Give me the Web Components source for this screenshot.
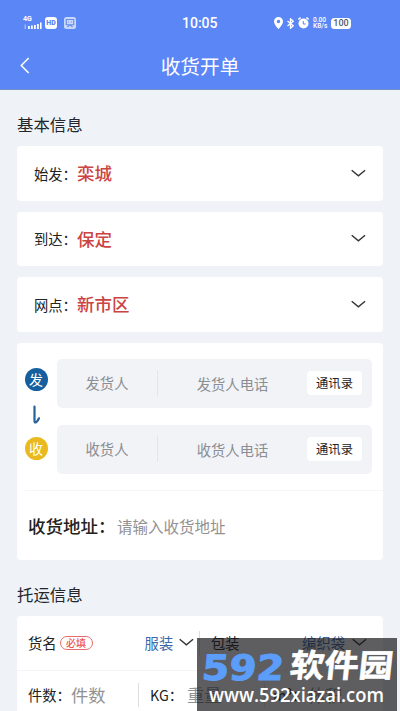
<!DOCTYPE html>
<html lang="zh-CN">
<head>
<meta charset="utf-8">
<title>收货开单</title>
<style>
html,body{margin:0;height:100%}
body{width:400px;height:711px;overflow:hidden;position:relative;background:#eff3f7;color:#222;font-family:"Noto Sans CJK SC",sans-serif}
</style>
</head>
<body>
<order-page></order-page>
<script>
const define = (name, html) => customElements.define(name, class extends HTMLElement {
  constructor() {
    super();
    const t = document.createElement('template');
    t.innerHTML = html.replace(/\{(\w+)\}/g, (_, k) => this.getAttribute(k) || '');
    this.attachShadow({ mode: 'open' }).append(t.content.cloneNode(true));
  }
});

define('chevron-icon', `<style>:host{display:block;width:16px;height:10px;flex:none}svg{display:block}</style>
<svg width="16" height="10" viewBox="0 0 16 10" fill="none" stroke="#333" stroke-width="1.4"><path d="M1.7 2.2 8.4 7.8l6.7-5.6"/></svg>`);

define('status-bar', `<style>
:host{display:flex;height:46px;box-sizing:border-box;padding:15px 49px 15px 22px;align-items:center;color:#fff;font-family:Roboto,sans-serif}
svg{display:block;flex:none}
.time{font:500 14px/16px Roboto,sans-serif;margin-left:106px;width:37px}
.right{display:flex;align-items:center;margin-left:auto}
.speed{font:500 6.6px/7px Roboto,sans-serif;width:15px;margin-left:4px;white-space:nowrap}
.speed div{height:6.5px}
.bat{background:#fff;color:#525a70;border-radius:3.5px;font:500 9px/11px Roboto,sans-serif;width:20px;height:11px;text-align:center;margin-left:3px}
.sig{position:relative;width:20px;height:13px}
.sig b{position:absolute;left:1px;top:-1px;font:700 7px/7px Roboto,sans-serif}
.sig svg{position:absolute;left:0;top:0}
.hd{font:900 7px/12px Roboto,sans-serif;background:#fff;color:#5b84f4;border-radius:3px;width:12px;height:12px;text-align:center;margin-left:3px}
</style>
<div class="sig"><b>4G</b><svg width="20" height="13" fill="#fff"><path d="M6 9h1.8v3H6zM9 8.5h1.8V12H9zM12 8h1.8v4H12zM15 7h1.8v5H15zM18 5.5h1.6V12H18z"/><path opacity=".4" d="M2.5 7.5h1.5V12H2.5z"/></svg></div>
<div class="hd">HD</div>
<svg style="margin-left:7px" width="12" height="12"><rect width="12" height="12" rx="2.5" fill="#c9d8fd"/><path d="M2.3 2.5h7.4v5.2H2.3zM3.5 10l2.5-2.3L8.500 10M4.300 5h.9M6.900 5h.9" fill="none" stroke="#668be9" stroke-width="1.100"/></svg>
<div class="time">10:05</div>
<div class="right">
<svg width="9" height="12" viewBox="0 0 9 12"><path fill="#fff" fill-rule="evenodd" d="M4.500 0A4.400 4.400 0 0 0 0 4.400C0 7.400 4.500 12 4.500 12S9 7.400 9 4.400A4.400 4.400 0 0 0 4.500 0Zm0 2.800a1.700 1.700 0 1 1 0 3.400 1.700 1.700 0 0 1 0-3.400Z"/></svg>
<svg style="margin-left:4px" width="7" height="11" viewBox="0 0 7 11"><path d="M.5 3 6.200 7.800 3.500 10.200V.8l2.700 2.400L.5 8" fill="none" stroke="#fff" stroke-width="1.300"/></svg>
<svg style="margin-left:4px" width="11" height="12" viewBox="0 0 11 12"><circle cx="5.500" cy="6.500" r="5" fill="#fff"/><path d="M.4 2.400 2.600.7M10.600 2.400 8.400.7" stroke="#fff" stroke-width="1.500"/><path d="M5.300 4v3h2.400" fill="none" stroke="#5b84f4"/></svg>
<div class="speed"><div>0.00</div><div>KB/s</div></div><div class="bat">100</div></div>`);

define('nav-bar', `<style>:host{display:grid;grid-template-columns:1fr auto 1fr;height:43px;align-items:center;color:#fff;box-sizing:border-box;padding-bottom:4px}
h1{margin:0;font-size:19.7px;line-height:28px;font-weight:400}
svg{margin-left:20px;display:block}</style>
<svg width="10" height="17" fill="none" stroke="#fff" stroke-width="1.6"><path d="M8.700 1 1.300 8.500 8.700 16"/></svg><h1><slot></slot></h1>`);

define('section-title', `<style>:host{display:block;font-size:16.4px;line-height:24px;color:#23262b;padding:22px 17px 10px}</style><slot></slot>`);

define('select-row', `<style>:host{display:flex;align-items:center;box-sizing:border-box;height:54.500px;margin:0 17px 11px;background:#fff;border-radius:4px;padding:0 17px}
span{font-size:14.3px;width:43px;white-space:nowrap}b{font-weight:500;font-size:17.5px;color:#cc4343;flex:1;line-height:24px}chevron-icon{margin-bottom:1px}</style>
<span>{label}：</span><b><slot></slot></b><chevron-icon></chevron-icon>`);

define('contact-row', `<style>:host{display:flex;align-items:center;height:49px;background:#f1f3f7;border-radius:5px;box-sizing:border-box;padding-right:10px;color:#8b8e92;font-size:14.300px}
.n{width:101px;text-align:center;box-sizing:border-box;border-right:1px solid #e2e5ea;line-height:26px}
.p{flex:1;text-align:center}
button{font:400 12.3px/23px "Noto Sans CJK SC",sans-serif;color:#222;background:#fff;border:0;border-radius:4px;width:55px;height:24px;padding:0}</style>
<div class="n">{who}</div><div class="p">{who}电话</div><button>通讯录</button>`);

define('route-mark', `<style>:host{display:flex;flex-direction:column;align-items:center;width:24px}
i{font-style:normal;width:23px;height:23px;border-radius:50%;color:#fff;font-size:14px;line-height:22px;text-align:center;background:#155f9f}
i.y{background:#e9b91f}svg{margin:14px 0 13px}</style>
<i>发</i><svg width="9" height="19" fill="none" stroke="#26639b" stroke-width="2.2" stroke-linecap="round" stroke-linejoin="round"><path d="M2.500 1.500V16q0 2 1.600 1.300Q5.800 16 7 13.300"/></svg><i class="y">收</i>`);

define('address-card', `<style>:host{display:block;margin:0 17px;background:#fff;border-radius:4px;height:217px;box-sizing:border-box;padding-top:16px}
.top{display:flex;gap:9px;padding:0 11px 0 7px}route-mark{padding-top:9.500px}.rows{flex:1;display:flex;flex-direction:column;gap:17px}
.addr{display:flex;align-items:center;height:68px;margin-top:16px;border-top:1px solid #f6f6f6;margin-left:8px;padding-left:3px;box-sizing:border-box;padding-top:3px}
b{font-weight:500;font-size:17.500px;width:89px;white-space:nowrap;color:#222}span{font-size:15.500px;color:#929292}</style>
<div class="top"><route-mark></route-mark><div class="rows"><contact-row who="发货人"></contact-row><contact-row who="收货人"></contact-row></div></div>
<div class="addr"><b>收货地址：</b><span>请输入收货地址</span></div>`);

define('cargo-card', `<style>:host{display:block;margin:0 17px;background:#fff;border-radius:4px;height:120px;font-size:14.300px}
.r{display:flex;align-items:center;height:55px;padding:0 16px 0 11px;box-sizing:border-box}
.r.a{border-bottom:1px solid #f5f5f5}
em{font-style:normal;color:#ec5555;border:1px solid #e86c6c;border-radius:8px;font-size:10px;font-weight:500;line-height:12px;width:31px;text-align:center;margin-left:3px}
.v{color:#3a69ab;margin-left:auto}.l{width:171px;display:flex;align-items:center}chevron-icon{margin-left:6px;margin-bottom:2px}.l chevron-icon{margin-left:5px}
.sep{width:1px;height:24px;background:#dedede;flex:none}
.r2{display:grid;grid-template-columns:43px 67px 12px 37px 77px 9px 35px auto;align-items:center;height:48px;padding-left:11px;white-space:nowrap}
.r2 span{font-size:17.300px;color:#929292}</style>
<div class="r a"><div class="l"><span>货名</span><em>必填</em><span class="v" style="margin-left:52px">服装</span><chevron-icon></chevron-icon></div><div class="sep"></div><span style="margin-left:11px">包装</span><span class="v">编织袋</span><chevron-icon></chevron-icon></div>
<div class="r2"><div>件数：</div><span>件数</span><div class="sep"></div><div>KG：</div><span>重量</span><div class="sep"></div><div>m³：</div><span>体积</span></div>`);

define('site-badge', `<style>:host{position:absolute;left:197px;top:638px;width:200px;height:73px;background:rgba(22,22,24,.69)}svg{display:block}</style>
<svg width="200" height="73"><g transform="translate(4 42) skewX(-5)"><text textLength="82" lengthAdjust="spacingAndGlyphs" font-family="DejaVu Sans" font-weight="700" font-size="35" fill="#5b9df8" stroke="#5b9df8" stroke-width="1">592</text></g>
<g transform="translate(92 38.500) skewX(-6)"><text textLength="103" lengthAdjust="spacingAndGlyphs" font-family="Noto Sans CJK SC" font-weight="700" font-size="32" fill="#fff" stroke="#fff" stroke-width=".6">软件园</text></g>
<text x="12" y="64" textLength="175" lengthAdjust="spacingAndGlyphs" font-family="Open Sans" font-weight="600" font-size="20" fill="#fff">www.592xiazai.com</text></svg>`);

define('order-page', `<style>:host{display:block;height:711px;overflow:hidden}
header{background:#5b86f6;height:89px;border-bottom:1px solid #6f8fc8}</style>
<header><status-bar></status-bar><nav-bar>收货开单</nav-bar></header>
<section-title>基本信息</section-title>
<select-row label="始发">栾城</select-row><select-row label="到达">保定</select-row><select-row label="网点">新市区</select-row>
<address-card></address-card>
<section-title>托运信息</section-title>
<cargo-card></cargo-card><site-badge></site-badge>`);
</script>
</body>
</html>
